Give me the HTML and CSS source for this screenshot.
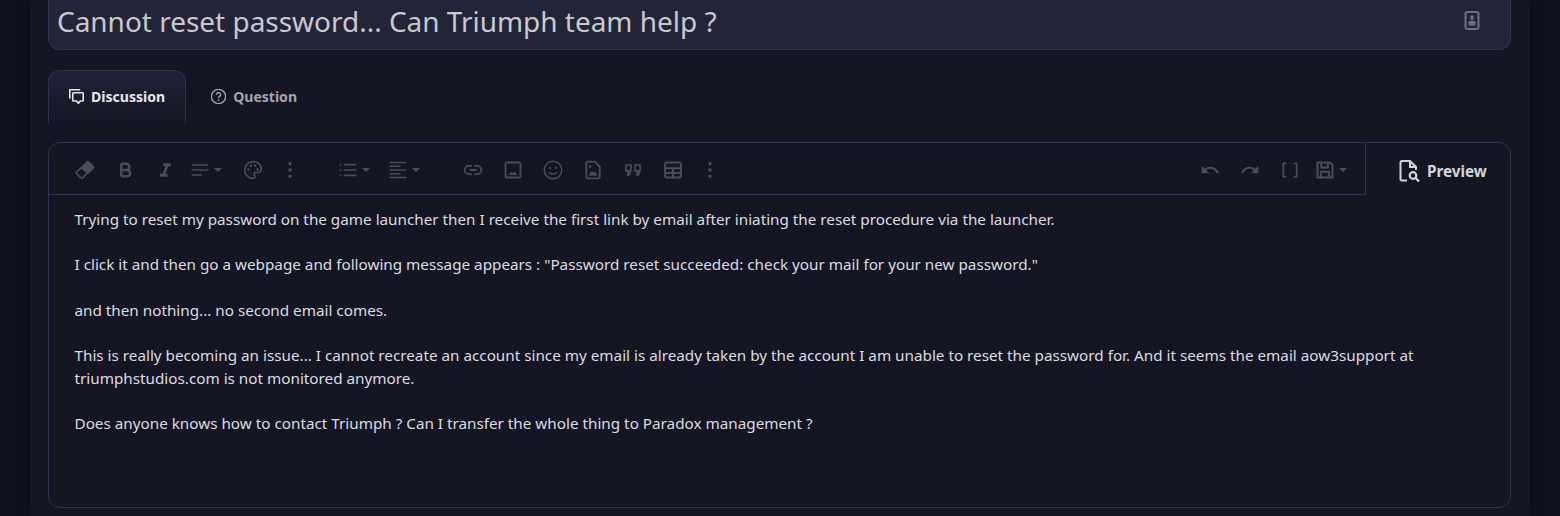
FILE: index.html
```html
<!DOCTYPE html>
<html lang="en">
<head>
<meta charset="utf-8">
<title>Cannot reset password</title>
<link rel="stylesheet" href="styles.css">
</head>
<body>
<main class="page">
  <div class="title-box">
    <span class="title-text">Cannot reset password... Can Triumph team help ?</span>
    <svg class="title-icon" viewBox="0 0 24 24"><rect x="5.500" y="3" width="13" height="17" rx="2" fill="none" stroke="currentColor" stroke-width="2"/><rect x="10.500" y="6.500" width="3" height="4.500" fill="currentColor"/><rect x="8.500" y="12" width="7" height="4.500" rx="1" fill="currentColor"/></svg>
  </div>
  <nav class="tabs">
    <div class="tab active">
      <svg class="tab-icon" viewBox="2 2 20 20" fill="none" stroke="currentColor" stroke-width="2.200"><path d="M3 15V4a1 1 0 0 1 1-1h13"/><path d="M8 7h12a1 1 0 0 1 1 1v9a1 1 0 0 1-1 1h-3l-2.500 3-2.500-3H8a1 1 0 0 1-1-1V8a1 1 0 0 1 1-1z"/></svg>
      <span>Discussion</span>
    </div>
    <div class="tab plain">
      <svg class="tab-icon" viewBox="2 2 20 20" fill="none" stroke="currentColor" stroke-width="1.800"><circle cx="12" cy="12" r="9.500"/><path d="M9.200 9.500a2.800 2.800 0 1 1 4.300 2.400c-1 .6-1.500 1.100-1.500 2.300"/><path d="M12 16v2"/></svg>
      <span>Question</span>
    </div>
  </nav>
  <section class="editor">
    <div class="editor-head">
      <div class="toolbar">
        <div class="tool-group g1">
          <svg class="ico" viewBox="0 0 24 24" fill="none" stroke="currentColor" stroke-width="2"><path fill="currentColor" stroke="none" d="M14 1.500a2 2 0 0 1 2.800 0l6 6a2 2 0 0 1 0 2.800l-6.800 6.800-8.800-8.800z"/><path d="M7.800 9.300 1.800 14.300a1.500 1.500 0 0 0 0 2.100l5.300 5.100a1.500 1.500 0 0 0 2.100 0l5.800-6.300z"/></svg>
          <svg class="ico" viewBox="0 0 24 24" fill="none" stroke="currentColor" stroke-width="3.200"><path d="M7.500 4.500v15M7.500 4.500h6a3.700 3.700 0 0 1 0 7.500h-6M7.500 12h7a3.700 3.700 0 0 1 0 7.500h-7"/></svg>
          <svg class="ico" viewBox="0 0 24 24" fill="currentColor"><path d="M10 4h9v3.500h-3L12.500 16.500H15V20H6v-3.500h3L12.500 7.500H10z"/></svg>
          <span class="drop"><svg class="ico" viewBox="0 0 24 24" fill="none" stroke="currentColor" stroke-width="2"><path d="M2 6h20M2 12h20M2 18h12"/></svg><i class="caret"></i></span>
          <svg class="ico" viewBox="0 0 24 24" fill="none" stroke="currentColor" stroke-width="2"><path d="M12 2a10 10 0 0 0 0 20c1.500 0 2.300-1 2.300-2.100 0-1.400-1.100-1.700-1.100-3 0-1.100.9-1.900 2-1.900h2.400c2.500 0 4.400-1.800 4.400-4C22 5.500 17.500 2 12 2z"/><circle cx="6.500" cy="11.500" r="1.500" fill="currentColor" stroke="none"/><circle cx="9.500" cy="7" r="1.500" fill="currentColor" stroke="none"/><circle cx="14.500" cy="7" r="1.500" fill="currentColor" stroke="none"/><circle cx="17.500" cy="11.500" r="1.500" fill="currentColor" stroke="none"/></svg>
          <svg class="ico dots" viewBox="0 0 24 24" fill="currentColor"><circle cx="12" cy="4.500" r="2"/><circle cx="12" cy="12" r="2"/><circle cx="12" cy="19.500" r="2"/></svg>
        </div>
        <div class="tool-group g2">
          <span class="drop"><svg class="ico" viewBox="0 0 24 24" fill="none" stroke="currentColor" stroke-width="2"><path d="M7 5.500h15M7 12h15M7 18.500h15"/><path d="M2 5.500h2M2 12h2M2 18.500h2"/></svg><i class="caret"></i></span>
          <span class="drop"><svg class="ico" viewBox="0 0 24 24" fill="none" stroke="currentColor" stroke-width="2"><path d="M2 3h20M2 7.500h13M2 12h20M2 16.500h13M2 21h20"/></svg><i class="caret"></i></span>
        </div>
        <div class="tool-group g3">
          <svg class="ico" viewBox="0 0 24 24" fill="none" stroke="currentColor" stroke-width="2.200"><path d="M10.500 7H7a5 5 0 0 0 0 10h3.500M13.500 7H17a5 5 0 0 1 0 10h-3.500M8 12h8"/></svg>
          <svg class="ico" viewBox="0 0 24 24" fill="none" stroke="currentColor" stroke-width="2.200"><rect x="3" y="3" width="18" height="18" rx="1.500"/><path fill="currentColor" stroke="none" d="M7 18l3-3.500 1.800 1.800 2.200-2.700 3 4.400z"/></svg>
          <svg class="ico" viewBox="0 0 24 24" fill="none" stroke="currentColor" stroke-width="1.800"><circle cx="12" cy="12" r="10.500"/><circle cx="8.500" cy="9.500" r="1.300" fill="currentColor" stroke="none"/><circle cx="15.500" cy="9.500" r="1.300" fill="currentColor" stroke="none"/><path d="M7.500 14.500c2 3 7 3 9 0"/></svg>
          <svg class="ico" viewBox="0 0 24 24" fill="none" stroke="currentColor" stroke-width="2.200"><path d="M14 2H5.500A1.500 1.500 0 0 0 4 3.500v17A1.500 1.500 0 0 0 5.500 22h13a1.500 1.500 0 0 0 1.500-1.500V8z"/><circle cx="8.500" cy="8" r="1.600" fill="currentColor" stroke="none"/><path fill="currentColor" stroke="none" d="M6.500 19l4-6 2.500 2.500 1.500-2 3 5.500z"/></svg>
          <svg class="ico" viewBox="0 0 24 24" fill="none" stroke="currentColor" stroke-width="2"><path d="M3.500 6h6v6.500L7.500 18H5.500l1.500-5H3.500zM14.500 6h6v6.500L18.500 18h-2l1.500-5h-3.500z"/></svg>
          <svg class="ico" viewBox="0 0 24 24" fill="none" stroke="currentColor" stroke-width="2.400"><rect x="2.500" y="3" width="19" height="18" rx="2"/><path d="M2.500 10h19M2.500 15.500h19M12 10v11"/></svg>
          <svg class="ico dots" viewBox="0 0 24 24" fill="currentColor"><circle cx="12" cy="4.500" r="2"/><circle cx="12" cy="12" r="2"/><circle cx="12" cy="19.500" r="2"/></svg>
        </div>
        <div class="tool-group g4">
          <svg class="ico" viewBox="0 0 24 24" fill="currentColor"><path d="M12.500 8c-2.700 0-5.100 1-7 2.600L2 7v9h9l-3.600-3.600c1.400-1.200 3.200-1.900 5.100-1.900 3.500 0 6.500 2.300 7.600 5.500l2.400-.8C21 11 17.100 8 12.500 8z"/></svg>
          <svg class="ico" viewBox="0 0 24 24" fill="currentColor"><path d="M11.500 8c2.700 0 5.100 1 7 2.600L22 7v9h-9l3.600-3.600c-1.400-1.200-3.200-1.900-5.100-1.900-3.500 0-6.500 2.300-7.600 5.500l-2.400-.8C3 11 6.900 8 11.500 8z"/></svg>
          <svg class="ico" viewBox="0 0 24 24" fill="none" stroke="currentColor" stroke-width="2"><path d="M7.500 4H4v16h3.500M16.500 4H20v16h-3.500"/></svg>
          <span class="drop"><svg class="ico" viewBox="0 0 24 24" fill="none" stroke="currentColor" stroke-width="2.400"><path d="M3 3h15l3 3v15H3z"/><path d="M7.500 3v6h8V3M7 21v-7h10v7"/></svg><i class="caret"></i></span>
        </div>
      </div>
      <div class="preview">
        <svg class="preview-icon" viewBox="0 0 24 24" fill="none" stroke="currentColor" stroke-width="2"><path d="M10 21.500H5a1.500 1.500 0 0 1-1.500-1.500V3.500A1.500 1.500 0 0 1 5 2h8l6 6v3"/><path d="M13 2v6h6"/><circle cx="16" cy="16.500" r="3.300" stroke-width="2.200"/><path d="M18.500 19l3.500 3.500" stroke-width="2.400"/></svg>
        <span>Preview</span>
      </div>
    </div>
    <div class="content">
      <p>Trying to reset my password on the game launcher then I receive the first link by email after iniating the reset procedure via the launcher.</p>
      <p>I click it and then go a webpage and following message appears : "Password reset succeeded: check your mail for your new password."</p>
      <p>and then nothing... no second email comes.</p>
      <p>This is really becoming an issue... I cannot recreate an account since my email is already taken by the account I am unable to reset the password for. And it seems the email aow3support at triumphstudios.com is not monitored anymore.</p>
      <p>Does anyone knows how to contact Triumph ? Can I transfer the whole thing to Paradox management ?</p>
    </div>
  </section>
</main>
</body>
</html>
```

FILE: styles.css
```css
* { box-sizing: border-box; }
html, body { margin: 0; height: 100%; }
body {
  background: #0e101c;
  font-family: "Noto Sans", sans-serif;
  color: #d8d8dc;
  overflow: hidden;
}
.page {
  width: 1500px;
  height: 516px;
  margin: 0 auto;
  padding: 0 19px 0 18px;
  background: #141624;
  box-shadow: 0 0 8px rgba(0, 0, 0, .3);
}
.title-box {
  height: 50px;
  display: flex;
  align-items: center;
  justify-content: space-between;
  padding: 0 26px 8px 8px;
  background: #222538;
  border: 1px solid #313450;
  border-top: 0;
  border-radius: 0 0 12px 12px;
}
.title-text { font-size: 27.960px; line-height: 42px; color: #c9c9ce; }
.title-icon { width: 24px; height: 24px; color: #6f7079; margin-top: 1px; }
.tabs {
  display: flex;
  margin-top: 20px;
  height: 53px;
}
.tab {
  display: flex;
  align-items: center;
  gap: 7px;
  padding: 0 20px 2px 20px;
  font-size: 14.050px;
  font-weight: 700;
  color: #a4a4aa;
  border: 1px solid transparent;
  border-bottom: 0;
  border-radius: 12px 12px 0 0;
}
.tab.plain { padding-left: 24px; }
.tab.active {
  color: #e6e6e9;
  background: linear-gradient(#20233a, #141624);
  border-color: #2f3250;
}
.tab-icon { width: 15px; height: 15px; flex: none; }
.editor {
  margin-top: 19px;
  height: 366px;
  border: 1px solid #2f3250;
  border-radius: 12px;
  background: #141624;
}
.editor-head { display: flex; height: 52px; }
.toolbar {
  flex: 1;
  display: flex;
  align-items: center;
  padding: 2px 17px 0 26px;
  border-right: 1px solid #2f3250;
  border-bottom: 1px solid #2f3250;
  color: #4a4c5a;
}
.tool-group { display: flex; align-items: center; gap: 20px; }
.g1 { margin-right: 38px; }
.g2 { margin-right: 43px; gap: 18px; }
.g2 .drop { margin: 0; }
.g4 { margin-left: auto; }
.ico { width: 20px; height: 20px; display: block; flex: none; }
.dots { margin-left: -3px; }
.drop { display: flex; align-items: center; gap: 4px; margin: 0 1px 0 -5px; }
.caret {
  width: 0;
  height: 0;
  border-left: 4.500px solid transparent;
  border-right: 4.500px solid transparent;
  border-top: 4.500px solid currentColor;
}
.preview {
  width: 144px;
  display: flex;
  align-items: center;
  gap: 6px;
  padding: 4px 0 0 31px;
  font-size: 15.250px;
  font-weight: 700;
  color: #d4d4d8;
}
.preview-icon { width: 24px; height: 24px; flex: none; }
.content {
  padding: 12.600px 25px 0 25.500px;
  font-size: 15.250px;
  line-height: 22.750px;
  color: #dcdce0;
}
.content p { margin: 0 0 22.750px; }
```
